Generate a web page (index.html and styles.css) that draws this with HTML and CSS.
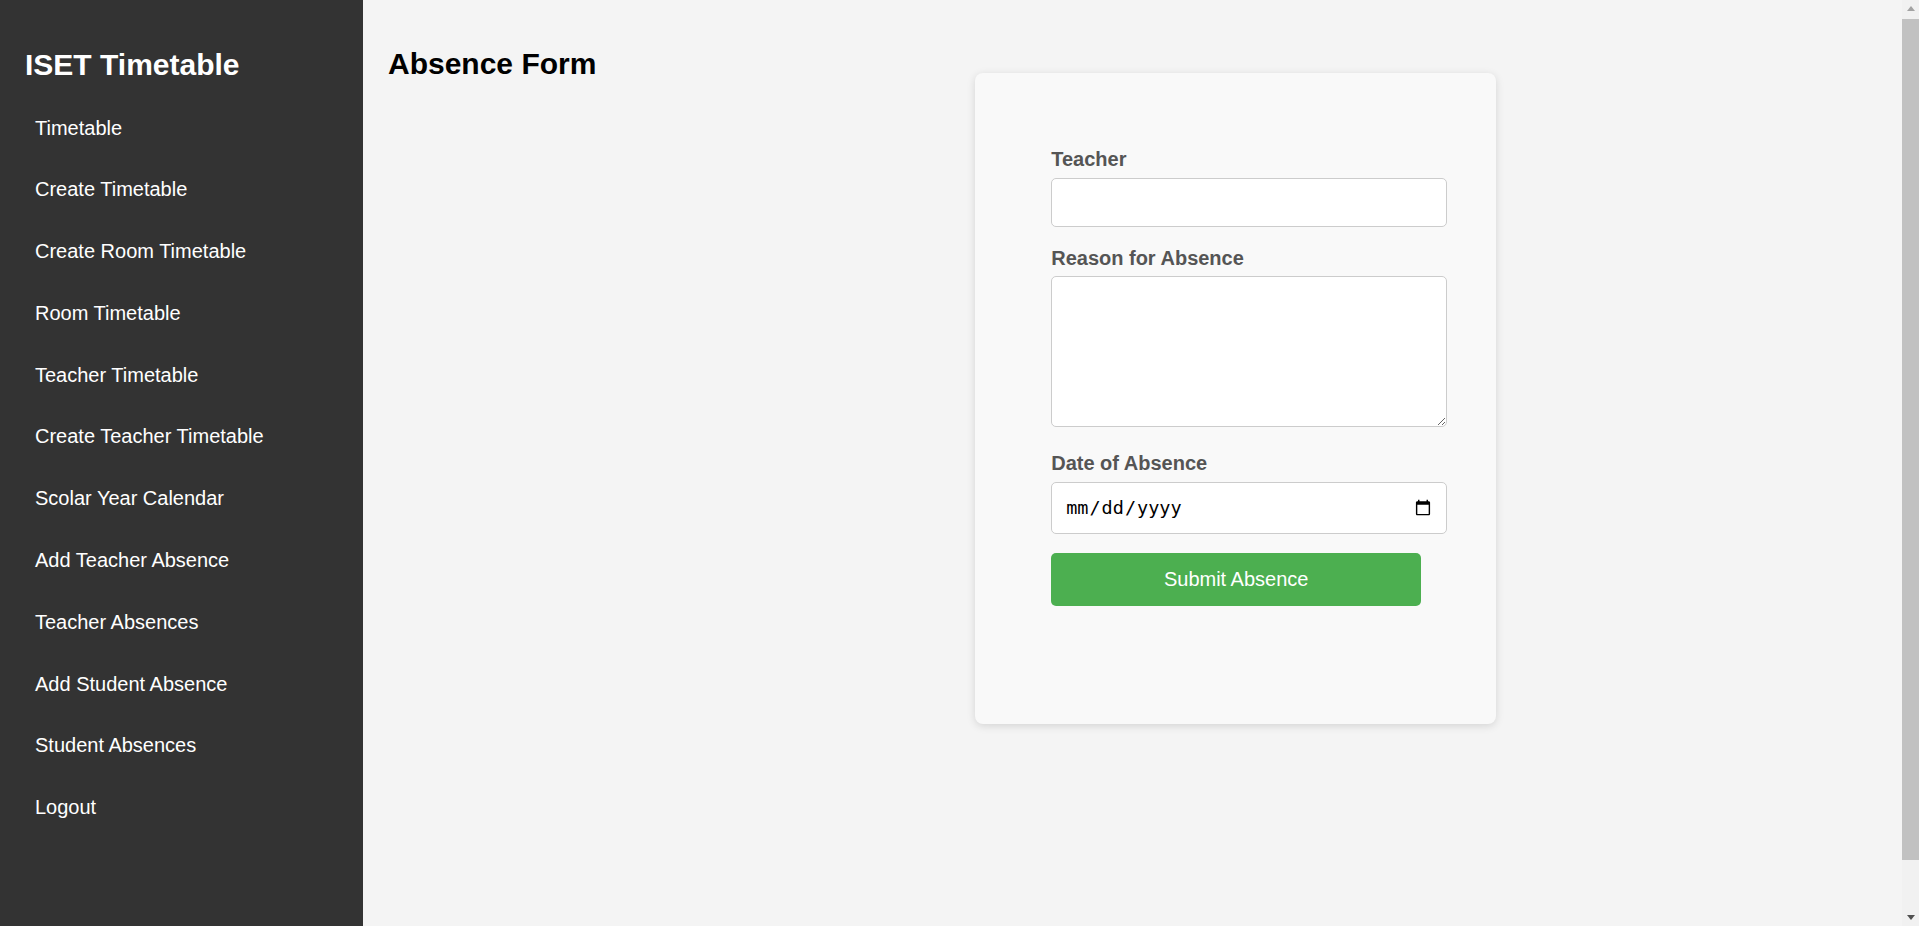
FILE: index.html
```html
<!DOCTYPE html>
<html lang="en">
<head>
<meta charset="utf-8">
<title>Absence Form</title>
<link rel="stylesheet" href="styles.css">
</head>
<body>
<div class="layout">
  <aside class="sidebar">
    <h2 class="brand">ISET Timetable</h2>
    <ul class="nav">
      <li><a href="#">Timetable</a></li>
      <li><a href="#">Create Timetable</a></li>
      <li><a href="#">Create Room Timetable</a></li>
      <li><a href="#">Room Timetable</a></li>
      <li><a href="#">Teacher Timetable</a></li>
      <li><a href="#">Create Teacher Timetable</a></li>
      <li><a href="#">Scolar Year Calendar</a></li>
      <li><a href="#">Add Teacher Absence</a></li>
      <li><a href="#">Teacher Absences</a></li>
      <li><a href="#">Add Student Absence</a></li>
      <li><a href="#">Student Absences</a></li>
      <li><a href="#">Logout</a></li>
    </ul>
  </aside>
  <main class="main">
    <h1 class="page-title">Absence Form</h1>
    <div class="form-area">
      <form class="card">
        <div class="field">
          <label class="label" for="teacher">Teacher</label>
          <input class="control" id="teacher" type="text">
        </div>
        <div class="field field-area">
          <label class="label" for="reason">Reason for Absence</label>
          <textarea class="control textarea" id="reason"></textarea>
        </div>
        <div class="field field-date">
          <label class="label" for="date">Date of Absence</label>
          <input class="control date" id="date" type="date">
        </div>
        <button class="submit" type="button">Submit Absence</button>
      </form>
    </div>
  </main>
  <div class="rail" aria-hidden="true">
    <div class="rail-btn"><span class="arrow-up"></span></div>
    <div class="rail-thumb"></div>
    <div class="rail-rest"></div>
    <div class="rail-btn"><span class="arrow-down"></span></div>
  </div>
</div>
</body>
</html>
```
FILE: styles.css
```css
html, body {
  margin: 0;
  padding: 0;
}

body {
  font-family: "Liberation Sans", Arial, sans-serif;
  background: #f4f4f4;
}

.layout {
  display: flex;
  align-items: stretch;
  min-height: calc(100vh + 56px);
}

.sidebar {
  width: 363px;
  flex-shrink: 0;
  box-sizing: border-box;
  background: #333333;
  color: #ffffff;
  padding: 25px 23px;
}

.brand {
  margin: 23px 0 14.7px 2px;
  font-size: 30px;
  font-weight: bold;
  line-height: 34.5px;
  color: #ffffff;
}

.nav {
  list-style: none;
  margin: 0;
  padding: 0;
}

.nav a {
  display: block;
  padding: 19.4px 12px;
  font-size: 20px;
  line-height: 23px;
  color: #ffffff;
  text-decoration: none;
}

.main {
  flex: 1;
  display: flex;
  align-items: flex-start;
  padding: 25px;
  min-width: 0;
}

.page-title {
  margin: 22.3px 0 0;
  font-size: 30px;
  font-weight: bold;
  line-height: 34.5px;
  color: #000000;
  white-space: nowrap;
}

.form-area {
  flex: 1;
  display: flex;
  justify-content: center;
  padding-right: 2px;
}

.card {
  margin-top: 48.3px;
  width: 370px;
  padding: 75px 75px 118px 76px;
  background: #f9f9f9;
  border-radius: 8px;
  box-shadow: 0 2px 9px rgba(0, 0, 0, 0.13);
}

.field {
  margin-bottom: 19.3px;
}

.field-area {
  margin-bottom: 25px;
}

.field-date {
  margin-bottom: 19.6px;
}

.label {
  display: block;
  margin-bottom: 7px;
  font-size: 20px;
  font-weight: bold;
  line-height: 23px;
  color: #555555;
}

.field-area .label,
.field-date .label {
  margin-bottom: 6.6px;
}

.control {
  display: block;
  width: 370px;
  height: 23px;
  margin: 0;
  padding: 12px;
  border: 1px solid #cccccc;
  border-radius: 5px;
  background: #ffffff;
  font-family: "Liberation Sans", Arial, sans-serif;
  font-size: 20px;
  color: #000000;
}

.textarea {
  height: 125px;
  resize: vertical;
}

.date {
  height: 26px;
  padding: 12px 12px 12px 13px;
  width: 369px;
  font-family: "DejaVu Sans Mono", monospace;
  font-size: 18.5px;
}

.submit {
  display: block;
  width: 370px;
  padding: 14.7px 0;
  border: none;
  border-radius: 5px;
  background: #4caf50;
  color: #ffffff;
  font-family: "Liberation Sans", Arial, sans-serif;
  font-size: 20px;
  line-height: 23px;
  cursor: pointer;
}

/* page scrollbar */
.rail {
  width: 17px;
  height: 100vh;
  flex-shrink: 0;
  display: flex;
  flex-direction: column;
  background: #f1f1f1;
}

.rail-btn {
  height: 17px;
  flex-shrink: 0;
  display: flex;
  align-items: center;
  justify-content: center;
}

.arrow-up {
  width: 0;
  height: 0;
  border-left: 4.5px solid transparent;
  border-right: 4.5px solid transparent;
  border-bottom: 5px solid #a3a3a3;
}

.arrow-down {
  width: 0;
  height: 0;
  border-left: 4.5px solid transparent;
  border-right: 4.5px solid transparent;
  border-top: 5px solid #505050;
}

.rail-thumb {
  height: 841px;
  margin-top: 2px;
  flex-shrink: 0;
  background: #c1c1c1;
}

.rail-rest {
  flex: 1;
}
```
